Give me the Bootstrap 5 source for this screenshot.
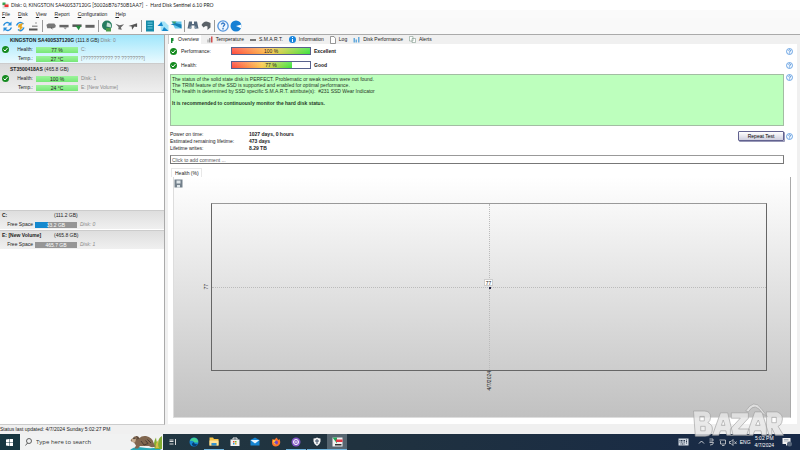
<!DOCTYPE html>
<html lang="en">
<head>
<meta charset="utf-8">
<meta name="viewport" content="width=device-width, initial-scale=1">
<title>Hard Disk Sentinel 6.10 PRO</title>
<link href="https://cdn.jsdelivr.net/npm/bootstrap@5.3.0/dist/css/bootstrap.min.css" rel="stylesheet">
<style>
body{font:5px/9px "Liberation Sans",Arial,sans-serif;color:#222;background:#fff}
a{color:inherit;text-decoration:none}
svg{display:block;flex:none}
b{font-weight:700}
.titlebar{height:10px;padding-left:2px;gap:2px;font-family:Lato,sans-serif}
.menus{height:8px;padding-left:2px;background:#fafafa}
.menus a{margin-right:8px}
.menus a::first-letter{text-decoration:underline}
.tools{height:16px;padding-left:1px;background:#f9f9f9}
.tools button{border:0;padding:0;background:none;width:13px}
.tools button svg{margin:auto}
.tools hr{width:1px;height:12px;margin:0 1px 0 2px;background:#999;border:0;opacity:1}
.side{width:165px;border:1px solid #aaa;border-left:0;border-bottom-color:#ccc}
.disk{height:29px;padding:1px 0 0 10px;background:linear-gradient(#d9d9d9,#efefef);border-bottom:1px solid #ccc}
.disk.sel{background:linear-gradient(#a0e6fb,#e9faff)}
.disk .ok{width:9px;margin-left:-9px}
.line{height:9px}
.line .lab{width:23px;text-align:right;margin-right:3px}
.meter{width:42px;height:6px;line-height:6px;text-align:center;background:linear-gradient(#9cf49c,#78e778);margin-right:3px}
.dim{color:#888}
.vols{margin-top:117px;gap:1px}
.vol{height:19px;padding-left:2px;background:linear-gradient(#dedede,#f0f0f0);border-top:1px solid #ccc}
.vol .lab{width:31px;text-align:right;margin-right:2px}
.vol .meter{background:#969696;color:#fff}
.vol .meter.c{background:linear-gradient(90deg,#1689ce 30%,#969696 30%)}
.size{margin-left:auto;width:110px}
.work{padding:0 3px 1px;background:#f0f0f0;border-top:1px solid #aaa}
.tabrow{height:9px;gap:6px}
.tabrow a{gap:3px}
.tabrow a:first-child{background:#fff;padding:0 2px;border-left:1px solid #ccc}
.pane{background:#fff;padding:0 4px 6px 2px}
.stat{height:14px}
.statname{width:50px}
.gauge{width:80px;height:8px;border:1px solid #58618d;margin-right:3px;background:#fff;position:relative;text-align:center;line-height:6px}
.gauge i{display:block;height:100%;background:linear-gradient(#fff3,#fff0),linear-gradient(90deg,#ff4a3c,#fbc84a 50%,#3fe33c)}
.gauge span{position:absolute;inset:0}
.advice{margin-top:2px}
.note{height:52px;background:#bdffbd;border:1px solid #a3bda3;padding:1px;line-height:6px;color:#263826;margin-right:2px}
.note p{margin:0}
.facts{margin-top:5px;height:21px;line-height:7px}
.facts dl{display:grid;grid-template-columns:79px auto;margin:0}
.facts dd,.facts dt{margin:0;font-weight:400;white-space:nowrap}
.facts dd{font-weight:700}
.repeat{width:46px;height:10px;border:1px solid #62628f;border-radius:1px;background:linear-gradient(#fff,#cfcfde);padding:0;line-height:7px;margin-right:2px;box-shadow:1px 1px 0 #9999b8}
.comment{height:9px;border:1px solid #777;border-top-color:#999;padding:0 1px;margin:3px 0 0;line-height:7px;background:#fff;width:calc(100% - 9px);flex:none}
.comment::placeholder{color:#555}
.htab{width:31px;height:9px;margin:4px 0 0 1px;padding-left:3px;border:1px solid #e8e8e8;border-bottom:0;flex:none}
.chart{background:linear-gradient(#fff,#c1c1c1);border:1px solid #ddd;border-top:0;border-right-color:#aaa;padding:2px 23px 0 0;margin:0 2px 0 3px}
.chart .save{border:0;padding:0;background:none;width:9px;height:9px}
.plot{margin-left:37px;margin-top:15px;height:168px;border:1px solid #666;border-top-color:#999;position:relative}
.plot .h{position:absolute;left:0;right:0;top:50%;border-top:1px dotted #bbb}
.plot .v{position:absolute;top:0;bottom:0;left:50%;border-left:1px dotted #bbb}
.plot .pt{position:absolute;left:50%;top:50%;width:2px;height:2px;background:#224}
.plot .tag{position:absolute;left:50%;top:50%;width:9px;height:7px;line-height:6px;margin:-8px 0 0 -5px;background:#fff;border:1px solid #ccc;text-align:center}
.turn{position:absolute;writing-mode:vertical-rl;transform:rotate(180deg);line-height:7px}
.ylab{left:-9px;top:calc(50% - 3px)}
.xlab{left:calc(50% - 3px);top:100%;padding-bottom:1px}
.status{height:9px;background:#f0f0f0}
.taskbar{height:16px;background:linear-gradient(90deg,#213943,#20323f 45%,#172947);color:#fff}
.start{width:20px;height:16px;border:0;background:#173640;padding:0 0 0 6px}
.find{width:143px;background:#f1f2f2;padding-left:5px}
.find input{border:0;background:none;padding:0;margin-left:4px;width:90px;font:6px/12px "Open Sans","Noto Sans",sans-serif;min-width:0;color:#333}
.find input::placeholder{color:#333;opacity:1}
.apps{width:184px}
.apps button{border:0;background:none;padding:0;width:20px;height:16px;border-bottom:1px solid transparent}
.apps button svg{margin:auto}
.apps .run{border-bottom-color:#70b4dd}
.apps .now{background:#566570}
.tray{gap:3px;padding-right:8px;line-height:7px}
.clock{margin:0 5px 0 1px}
.kbd{margin-right:6px}
.brand{position:absolute;right:12px;bottom:12px;width:99px;height:36px}
</style>
<script src="https://cdn.jsdelivr.net/npm/bootstrap@5.3.0/dist/js/bootstrap.bundle.min.js"></script>
</head>
<body class="vh-100 d-flex flex-column overflow-hidden text-nowrap position-relative">
<svg width="0" height="0" class="position-absolute">
<symbol id="ok" viewBox="0 0 14 14"><circle cx="7" cy="7" r="7" fill="#168b20"/><path d="M3 7l3 3 5-6" fill="none" stroke="#fff" stroke-width="2"/></symbol>
<symbol id="help" viewBox="0 0 14 14"><circle cx="7" cy="7" r="6" fill="#eef6ff" stroke="#5294dd" stroke-width="1.6"/><path d="M5 5q2-3 4 0q0 1-2 3m0 1v2" fill="none" stroke="#3478c6" stroke-width="1.6"/></symbol>
</svg>
<header class="titlebar d-flex align-items-center"><svg width="7" height="7" viewBox="0 0 14 14"><path d="M1 3h12v10H1z" fill="#ddd"/><path d="M1 1h6v5H1z" fill="#39a552"/><path d="M5 5h8v5H5z" fill="#e33"/></svg><span>Disk: 0, KINGSTON SA400S37120G [50026B76750B1AA7] &nbsp;- &nbsp;Hard Disk Sentinel 6.10 PRO</span></header>
<nav class="menus d-flex align-items-center"><a href="#">File</a><a href="#">Disk</a><a href="#">View</a><a href="#">Report</a><a href="#">Configuration</a><a href="#">Help</a></nav>
<div class="tools d-flex align-items-center">
<button aria-label="Refresh"><svg width="11" height="11" viewBox="0 0 22 22" fill="none" stroke="#278edb" stroke-width="3"><path d="M3 9q5-10 14-3M19 13q-5 10-14 3"/><path d="M19 1v8h-8zM3 21v-8h8z" fill="#278edb" stroke="none"/></svg></button>
<button aria-label="Refresh disk"><svg width="11" height="11" viewBox="0 0 22 22"><path d="M3 9q5-10 14-3M18 13q-5 10-12 4" fill="none" stroke="#278edb" stroke-width="3"/><path d="M7 7l9-3-3 7 3 1-8 9 2-8H6z" fill="#e9a51e"/></svg></button>
<button aria-label="Eject"><svg width="11" height="11" viewBox="0 0 22 22"><path d="M2 15h17v4H2z" fill="#555"/><path d="M8 9h11v3H8zM14 3h4v2h-4z" fill="#999"/></svg></button><hr>
<button aria-label="Disk"><svg width="10" height="11" viewBox="0 0 24 22"><path d="M1 7l5-3h14l3 4v5l-5 2H3z" fill="#777"/><path d="M11 14l5 5-2-6z" fill="#555"/></svg></button>
<button aria-label="Short test"><svg width="10" height="11" viewBox="0 0 24 22"><path d="M1 7h22v6H1z" fill="#666"/><path d="M10 13h10l-5 5z" fill="#999"/></svg></button>
<button aria-label="Extended test"><svg width="10" height="11" viewBox="0 0 24 22"><path d="M1 6h22v6H1z" fill="#555"/><path d="M8 9h14l-6 11-4-6z" fill="#218c3c"/></svg></button>
<button aria-label="Surface test"><svg width="10" height="11" viewBox="0 0 24 22"><path d="M1 7h22v7H1z" fill="#626262"/></svg></button><hr>
<button aria-label="Network"><svg width="12" height="12" viewBox="0 0 24 24"><circle cx="12" cy="11" r="10" fill="#267c60"/><path d="M12 5q10 1 8 10l-9-2z" fill="#c8e0d8"/><path d="M10 16h10v7H10z" fill="#4b9b4a"/></svg></button>
<button aria-label="Send"><svg width="10" height="11" viewBox="0 0 22 22"><path d="M1 5l9 3 10-2-7 7 2 5-8-1 1-5z" fill="#6a6a6a"/></svg></button>
<button aria-label="Send test"><svg width="10" height="11" viewBox="0 0 22 22"><path d="M20 4v8l-6-1-5 7-1-7-7-1 9-3z" fill="#555"/></svg></button><hr>
<button aria-label="Report"><svg width="10" height="12" viewBox="0 0 20 24"><path d="M2 1h16v22H2z" fill="#168ba8"/><path d="M5 6h10M5 11h10M5 16h10" stroke="#71cbe1" stroke-width="2"/></svg></button>
<button aria-label="Export report"><svg width="12" height="12" viewBox="0 0 24 24"><path d="M6 3h9l8 8v11H8z" fill="#a5e3f7"/><path d="M1 12l8-8 3 8zM14 14l9 8H10z" fill="#1387cc"/></svg></button>
<button aria-label="Mail report"><svg width="12" height="12" viewBox="0 0 24 24"><path d="M3 3h20v14H10z" fill="#61c4eb"/><path d="M1 9l10 2 12 6v-8L11 6z" fill="#147eb5"/><path d="M3 3h10l-4 5z" fill="#3b9e70"/></svg></button><hr>
<button aria-label="Find"><svg width="12" height="12" viewBox="0 0 24 24"><path d="M4 3h6v5h4V3h6l3 14h-8v-6H9v6H1z" fill="#54687c"/><path d="M5 13h3v5H5zM16 13h3v5h-3z" fill="#8399ac"/></svg></button>
<button aria-label="Undo"><svg width="12" height="12" viewBox="0 0 24 24"><path d="M3 10q6-12 18-4v9l-6 5v-7q-4-3-8 2z" fill="#5b6268"/></svg></button><hr>
<button aria-label="Help"><svg width="12" height="12"><use href="#help"/></svg></button>
<button aria-label="About"><svg width="12" height="12" viewBox="0 0 24 24"><circle cx="12" cy="12" r="11" fill="#1780d4"/><path d="M12 12l11-3v8z" fill="#fff"/></svg></button>
</div>
<main class="flex-fill d-flex">
<aside class="side flex-shrink-0 d-flex flex-column">
<section class="disk sel"><div class="line"><b>KINGSTON SA400S37120G</b> (111.8 GB) <span class="dim">Disk: 0</span></div>
<div class="line d-flex align-items-center"><svg class="ok" width="7" height="7"><use href="#ok"/></svg><span class="lab">Health:</span><span class="meter">77 %</span><span class="dim">C:</span></div>
<div class="line d-flex align-items-center"><span class="lab">Temp.:</span><span class="meter">27 °C</span><span class="dim">[??????????? ?? ????????]</span></div></section>
<section class="disk"><div class="line"><b>ST3500418AS</b> (465.8 GB)</div>
<div class="line d-flex align-items-center"><svg class="ok" width="7" height="7"><use href="#ok"/></svg><span class="lab">Health:</span><span class="meter">100 %</span><span class="dim">Disk: 1</span></div>
<div class="line d-flex align-items-center"><span class="lab">Temp.:</span><span class="meter">24 °C</span><span class="dim">E: [New Volume]</span></div></section>
<div class="vols d-flex flex-column">
<section class="vol"><div class="line d-flex"><b>C:</b><span class="size">(111.2 GB)</span></div><div class="line d-flex align-items-center"><span class="lab">Free Space</span><span class="meter c">33.2 GB</span><i class="dim">Disk: 0</i></div></section>
<section class="vol"><div class="line d-flex"><b>E: [New Volume]</b><span class="size">(465.8 GB)</span></div><div class="line d-flex align-items-center"><span class="lab">Free Space</span><span class="meter">465.7 GB</span><i class="dim">Disk: 1</i></div></section>
</div>
</aside>
<section class="work flex-fill d-flex flex-column">
<nav class="tabrow d-flex">
<a href="#" class="d-flex align-items-center"><svg width="4" height="6" viewBox="0 0 8 12"><path d="M0 2h5v6H3v4H0z" fill="#168b35"/></svg>Overview</a>
<a href="#" class="d-flex align-items-center"><svg width="6" height="7" viewBox="0 0 12 14"><path d="M1 7h2v6H1zM4 4h3v9H4z" fill="#999"/><path d="M8 1h3v12H8z" fill="#d34d4d"/></svg>Temperature</a>
<a href="#" class="d-flex align-items-center"><svg width="6" height="4" viewBox="0 0 12 8"><path d="M0 2h12v4H0z" fill="#777"/></svg>S.M.A.R.T.</a>
<a href="#" class="d-flex align-items-center"><svg width="7" height="7" viewBox="0 0 14 14"><circle cx="7" cy="7" r="7" fill="#1985dd"/><path d="M7 2v2m0 2v6" stroke="#fff" stroke-width="2"/></svg>Information</a>
<a href="#" class="d-flex align-items-center"><svg width="6" height="8" viewBox="0 0 12 16"><path d="M1 1h7l3 4v10H1z" fill="#fff" stroke="#777" stroke-width="1.5"/></svg>Log</a>
<a href="#" class="d-flex align-items-center"><svg width="7" height="7" viewBox="0 0 14 14"><path d="M1 4h3v9H1zM5 7h3v6H5zM10 2h3v11h-3z" fill="#65aadc"/></svg>Disk Performance</a>
<a href="#" class="d-flex align-items-center"><svg width="7" height="7" viewBox="0 0 14 14"><path d="M1 1h7v9H1zM6 5h7v8H6z" fill="#fff" stroke="#6c8b7b"/></svg>Alerts</a>
</nav>
<div class="pane flex-fill d-flex flex-column">
<div class="stat d-flex align-items-center"><svg class="me-1" width="7" height="7"><use href="#ok"/></svg><span class="statname">Performance:</span><span class="gauge"><i style="width:100%"></i><span>100 %</span></span><b>Excellent</b><svg class="ms-auto" width="7" height="7"><use href="#help"/></svg></div>
<div class="stat d-flex align-items-center"><svg class="me-1" width="7" height="7"><use href="#ok"/></svg><span class="statname">Health:</span><span class="gauge"><i style="width:77%"></i><span>77 %</span></span><b>Good</b><svg class="ms-auto" width="7" height="7"><use href="#help"/></svg></div>
<div class="advice d-flex"><div class="note flex-fill"><p>The status of the solid state disk is PERFECT. Problematic or weak sectors were not found.</p><p>The TRIM feature of the SSD is supported and enabled for optimal performance.</p><p>The health is determined by SSD specific S.M.A.R.T. attribute(s): &nbsp;#231 SSD Wear Indicator</p><p>&nbsp;</p><p><b>It is recommended to continuously monitor the hard disk status.</b></p></div><svg width="7" height="7"><use href="#help"/></svg></div>
<div class="facts d-flex align-items-start justify-content-between"><dl><dt>Power on time:</dt><dd>1027 days, 0 hours</dd><dt>Estimated remaining lifetime:</dt><dd>473 days</dd><dt>Lifetime writes:</dt><dd>8.29 TB</dd></dl><div class="d-flex align-items-center"><button class="repeat">Repeat Test</button><svg width="7" height="7"><use href="#help"/></svg></div></div>
<input class="comment d-block" aria-label="Comment" placeholder="Click to add comment ...">
<div class="htab">Health (%)</div>
<div class="chart flex-fill"><button class="save d-block" aria-label="Save chart"><svg width="9" height="9" viewBox="0 0 18 18"><path d="M1 1h16v16H1z" fill="#73808b"/><path d="M5 3h8v6H5zM6 12h6v5H6z" fill="#dfe6ea"/></svg></button>
<div class="plot"><span class="h"></span><span class="v"></span><span class="pt"></span><span class="tag">77</span><span class="turn ylab">77</span><span class="turn xlab">4/7/2024</span></div></div>
</div>
</section>
</main>
<div class="status">Status last updated: 4/7/2024 Sunday 5:02:27 PM</div>
<footer class="taskbar d-flex align-items-center">
<button class="start" aria-label="Start"><svg width="7" height="7" viewBox="0 0 14 14"><path d="M0 1l6-1v6H0zM7 0h7v6H7zM0 7h6v7l-6-1zM7 7h7v7H7z" fill="#fff"/></svg></button>
<div class="find d-flex align-items-center h-100"><svg width="7" height="8" viewBox="0 0 14 16"><circle cx="8" cy="6" r="5" fill="none" stroke="#333" stroke-width="1.5"/><path d="M5 10l-4 5" stroke="#333" stroke-width="1.5"/></svg><input aria-label="Search" placeholder="Type here to search">
<svg class="ms-auto" width="34" height="16" viewBox="0 0 68 32"><path d="M2 32q9-8 25-5t30 0l8 5z" fill="#28a6b5"/><path d="M52 30q-5-12 2-23 1 10 4 13Q58 8 66 4v26z" fill="#82ad32"/><path d="M53 28q0-11 6-16-2 12 1 16" fill="#d5bf47"/><path d="M7 9q2-5 8-5 4 0 6 4 4-5 13-4 13 3 15 13 2 6 4 8-9 3-13-1H22l-4 5h-7l3-6-4-6-5-2q-4-3 2-6z" fill="#80664f"/><path d="M5 10q5-3 9 1l-2 6-6-1z" fill="#c7ad90"/><path d="M15 5l4 3-3 3M24 14l6 8 8-3-5-6M37 11l7 7" stroke="#4a3b32" stroke-width="2" fill="none"/><circle cx="10" cy="9" r="1.4" fill="#222"/></svg></div>
<div class="apps d-flex justify-content-between">
<button aria-label="Task view"><svg width="8" height="8" viewBox="0 0 16 16" fill="none" stroke="#ddd" stroke-width="2"><path d="M1 4h8M1 7h8M1 12h8M13 2v12"/></svg></button>
<button aria-label="Edge"><svg width="10" height="10" viewBox="0 0 20 20"><circle cx="10" cy="10" r="9" fill="#1685d2"/><path d="M2 8Q5 0 13 2q6 3 5 9H10q0-5-8-3z" fill="#43d294"/><path d="M10 10q0 6 8 4-5 7-11 3-3-4 3-7z" fill="#073d73"/></svg></button>
<button class="run" aria-label="Explorer"><svg width="10" height="9" viewBox="0 0 20 18"><path d="M1 1h7l2 3h9v13H1z" fill="#f7c448"/><path d="M1 7h18v10h-4v-5H5v5H1z" fill="#ffe49a"/><path d="M5 12h10v5H5z" fill="#3092d2"/></svg></button>
<button aria-label="Store"><svg width="10" height="10" viewBox="0 0 20 20"><path d="M6 5V2h8v3" fill="none" stroke="#eee" stroke-width="2"/><path d="M1 5h18v13H1z" fill="#f2f2f2"/><path d="M6 8h3v3H6z" fill="#e84d2f"/><path d="M10 8h3v3h-3z" fill="#72b72b"/><path d="M6 12h3v3H6z" fill="#269adb"/><path d="M10 12h3v3h-3z" fill="#e6b52c"/></svg></button>
<button aria-label="Mail"><svg width="10" height="9" viewBox="0 0 20 18"><path d="M1 6l9-5 9 5v11H1z" fill="#1685d2"/><path d="M1 6h18l-9 7z" fill="#e6f5ff"/></svg></button>
<button aria-label="Firefox"><svg width="10" height="10" viewBox="0 0 20 20"><path d="M3 4l3 2q2-3 6-5 0 3 3 5l2-2q5 13-7 15Q-1 19 3 4z" fill="#ff7429"/><circle cx="10" cy="11" r="4" fill="#7445c5"/><path d="M4 5q3 2 6 2l-4 4 5 4q-7 1-7-10z" fill="#ffcb39"/></svg></button>
<button class="run" aria-label="Viber"><svg width="10" height="10" viewBox="0 0 20 20"><circle cx="10" cy="10" r="9" fill="#8358c6"/><circle cx="10" cy="10" r="5" fill="none" stroke="#fff" stroke-width="2"/><path d="M7 10h6" stroke="#fff" stroke-width="2"/></svg></button>
<button class="run" aria-label="Security"><svg width="8" height="9" viewBox="0 0 16 18"><path d="M1 3q5 0 7-2 3 2 7 2v6q-1 6-7 9-6-3-7-9z" fill="#f4f4f4"/><path d="M8 4v10M4 8h8" stroke="#40536a" stroke-width="2"/></svg></button>
<button class="run now" aria-label="Hard Disk Sentinel"><svg width="11" height="10" viewBox="0 0 22 20"><path d="M1 1h20v18H1z" fill="#f1f1f1"/><path d="M1 1h9v12z" fill="#24a657"/><path d="M8 5h13v5H8z" fill="#e13945"/><path d="M6 14h13v3H6z" fill="#333"/></svg></button>
</div>
<div class="tray d-flex align-items-center ms-auto">
<svg class="kbd" width="11" height="8" viewBox="0 0 22 16"><path d="M1 1h20v14H1z" fill="#d4dbe3"/><path d="M3 5h11M3 8h11M5 12h8M17 3v9" stroke="#27364c" stroke-width="2" stroke-dasharray="2 1"/></svg>
<svg width="7" height="7" viewBox="0 0 14 14" fill="none" stroke="#fff" stroke-width="1.5"><path d="M2 9l5-5 5 5"/></svg>
<svg width="7" height="8" viewBox="0 0 14 16" fill="none" stroke="#ddd" stroke-width="1.5"><path d="M3 2h7v4H3M3 9h8q0 5-7 5"/></svg>
<svg width="8" height="7" viewBox="0 0 16 14" fill="none" stroke="#ddd" stroke-width="1.5"><path d="M3 2h12v8H5V4M8 13h5"/></svg>
<svg width="8" height="7" viewBox="0 0 16 14" fill="none" stroke="#ddd" stroke-width="1.5"><path d="M1 5h3l4-4v12L4 9H1zM11 5l4 5M15 5l-4 5"/></svg>
<span>ENG</span><span class="clock text-center">5:02 PM<br>4/7/2024</span>
<svg width="10" height="10" viewBox="0 0 20 20"><path d="M1 2h16v12h-5l-4 4v-4H1z" fill="#f1f1f1"/><circle cx="15" cy="14" r="5" fill="#56657a"/><path d="M4 5h9M4 8h9" stroke="#718096"/></svg>
</div>
</footer>
<svg class="brand" viewBox="0 0 102 40" role="img" aria-label="BAZAR" fill="#e5e5e5" fill-opacity=".82" stroke="#9d9d9d" stroke-width=".7" fill-rule="evenodd"><path d="M1 10h12q7 0 7 7 0 4-3 6 5 2 5 7 0 8-8 8H3zM8 16v5h5v-5zM9 27v5h5v-5zM31 12h8l6 25h-7l-1-5h-6l-2 5h-7zM34 20l-2 6h4zM43 12h19v6L51 30h12v7H42v-7l11-12H43zM69 11h8l8 26h-8l-1-5h-7l-2 5h-7zM73 20l-3 6h5zM82 11h12q8 3 5 12-1 3-4 4l6 10h-9l-4-8v8h-6zM88 17v6h5v-6z"/><path d="M59 10Q68-4 76 7l7 9-5-3Q69-1 62 11z"/></svg>
</body>
</html>
